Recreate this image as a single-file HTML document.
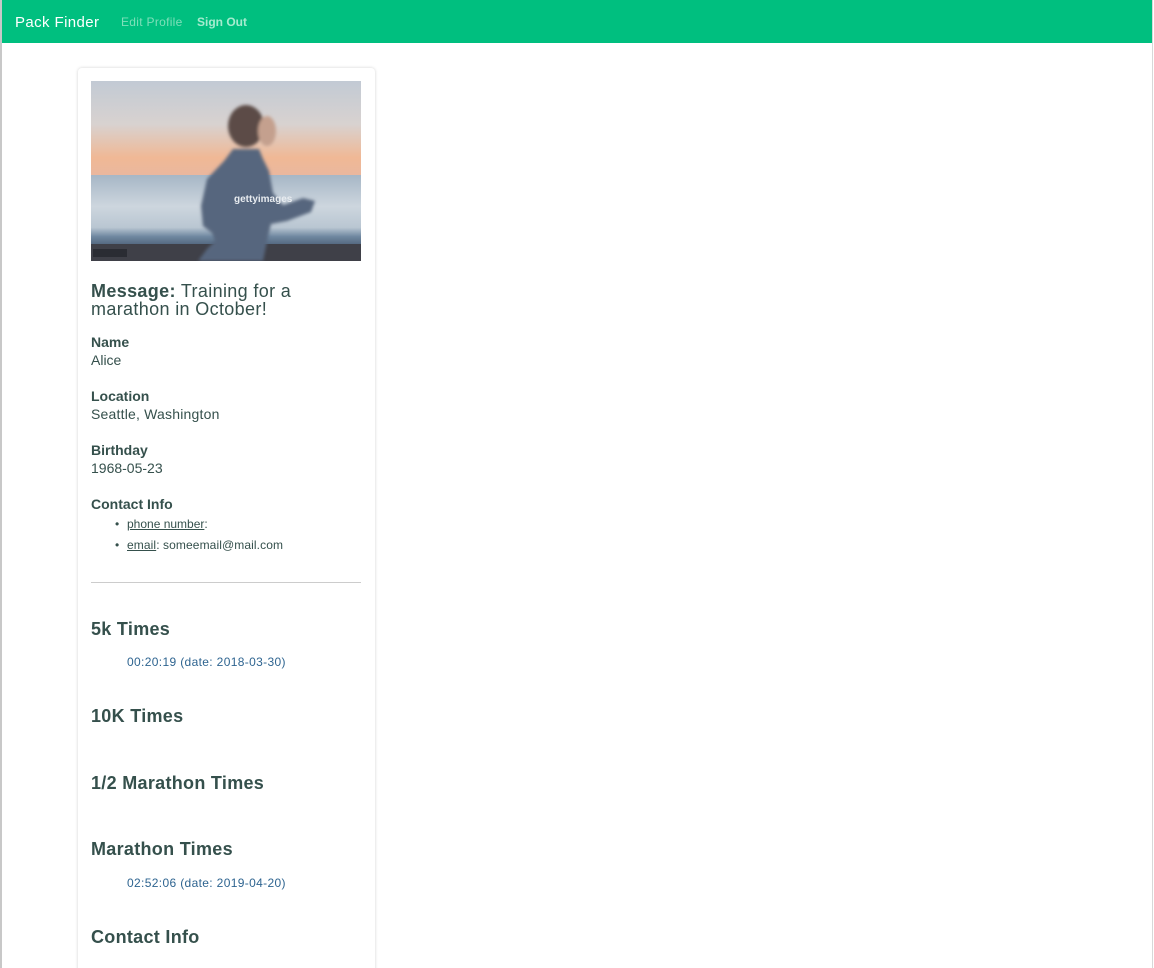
<!DOCTYPE html>
<html style="overflow:hidden"><head><style>
body{margin:0;width:1154px;height:968px;overflow:hidden;background:#fff;font-family:"Liberation Sans",sans-serif;color:#35504c;position:relative}
.frame{position:absolute;left:0;top:0;width:1153px;height:968px;border-left:2px solid #c8c8c8;border-right:1px solid #d8d8d8;box-sizing:border-box}
.nav{position:absolute;left:2px;top:0;width:1150px;height:43px;background:#00bf7f}
.nav span{position:absolute;white-space:nowrap}
.card{position:absolute;left:78px;top:68px;width:297px;height:940px;background:#fff;border-radius:4px;box-shadow:0 0 3px rgba(0,0,0,.18)}
.t{position:absolute;left:91px;white-space:nowrap;line-height:1}
.b{font-weight:bold}
.h{font-size:18px;font-weight:bold;letter-spacing:.3px}
.time{font-size:12px;color:#2e6490;left:127px;letter-spacing:.35px}
</style></head><body>
<div class="card"></div>
<div class="frame"></div>
<div class="nav">
<span style="left:13px;font-size:15px;color:#fff;top:14px;letter-spacing:.4px">Pack Finder</span>
<span style="left:119px;font-size:12px;color:#7fdfba;top:15px;letter-spacing:.3px">Edit Profile</span>
<span style="left:195px;font-size:12px;color:#a6ebcf;font-weight:bold;top:15px">Sign Out</span>
</div>
<svg style="position:absolute;left:91px;top:81px" width="270" height="180" viewBox="0 0 270 180">
<defs>
<linearGradient id="sky" x1="0" y1="0" x2="0" y2="1">
<stop offset="0" stop-color="#c2cad4"/><stop offset=".45" stop-color="#d8d2d0"/><stop offset=".8" stop-color="#f0b895"/><stop offset="1" stop-color="#e9b79f"/></linearGradient>
<linearGradient id="sea" x1="0" y1="0" x2="0" y2="1">
<stop offset="0" stop-color="#a6b6c6"/><stop offset=".45" stop-color="#cdd6de"/><stop offset=".75" stop-color="#b9c6d2"/><stop offset=".88" stop-color="#6f87a0"/><stop offset="1" stop-color="#52667e"/></linearGradient>
<filter id="bl"><feGaussianBlur stdDeviation="1.5"/></filter>
</defs>
<rect width="270" height="96" fill="url(#sky)"/>
<rect y="94" width="270" height="70" fill="url(#sea)"/>
<rect y="163" width="270" height="17" fill="#3f4048"/>
<g filter="url(#bl)">
<path d="M142 68 L133 80 L116 98 L110 125 L112 145 L121 152 L124 160 L116 168 L107 180 L172 180 L176 160 L180 143 L196 140 L220 131 L224 120 L212 117 L192 124 L182 112 L178 90 L172 78 L168 68 Z" fill="#56667e"/>
<ellipse cx="155" cy="45" rx="18" ry="21" fill="#5b4c46"/>
<ellipse cx="176" cy="50" rx="9" ry="15" fill="#c4a08e"/>
</g>
<text x="143" y="121" font-family="Liberation Sans" font-size="10" fill="#e8ecf0" font-weight="bold">gettyimages</text>
<rect x="2" y="168" width="34" height="8" fill="#2a2c33"/>
</svg>
<div class="t" style="top:282px;font-size:18px;line-height:18px;letter-spacing:.35px"><b>Message:</b> Training for a<br>marathon in October!</div>
<div class="t b" style="top:335px;font-size:14px">Name</div>
<div class="t" style="top:353px;font-size:14px">Alice</div>
<div class="t b" style="top:389px;font-size:14px">Location</div>
<div class="t" style="top:407px;font-size:14px;letter-spacing:.2px">Seattle, Washington</div>
<div class="t b" style="top:443px;font-size:14px">Birthday</div>
<div class="t" style="top:461px;font-size:14px">1968-05-23</div>
<div class="t b" style="top:497px;font-size:14px">Contact Info</div>
<div class="t" style="left:115px;top:518px;font-size:12px">•</div>
<div class="t" style="left:127px;top:518px;font-size:12px"><u>phone number</u>:</div>
<div class="t" style="left:115px;top:539px;font-size:12px">•</div>
<div class="t" style="left:127px;top:539px;font-size:12px;letter-spacing:.1px"><u>email</u>: someemail@mail.com</div>
<div style="position:absolute;left:91px;top:582px;width:270px;height:1px;background:#ccc"></div>
<div class="t h" style="top:620px">5k Times</div>
<div class="t time" style="top:656px">00:20:19 (date: 2018-03-30)</div>
<div class="t h" style="top:707px">10K Times</div>
<div class="t h" style="top:774px">1/2 Marathon Times</div>
<div class="t h" style="top:840px">Marathon Times</div>
<div class="t time" style="top:877px">02:52:06 (date: 2019-04-20)</div>
<div class="t h" style="top:928px">Contact Info</div>
</body></html>
